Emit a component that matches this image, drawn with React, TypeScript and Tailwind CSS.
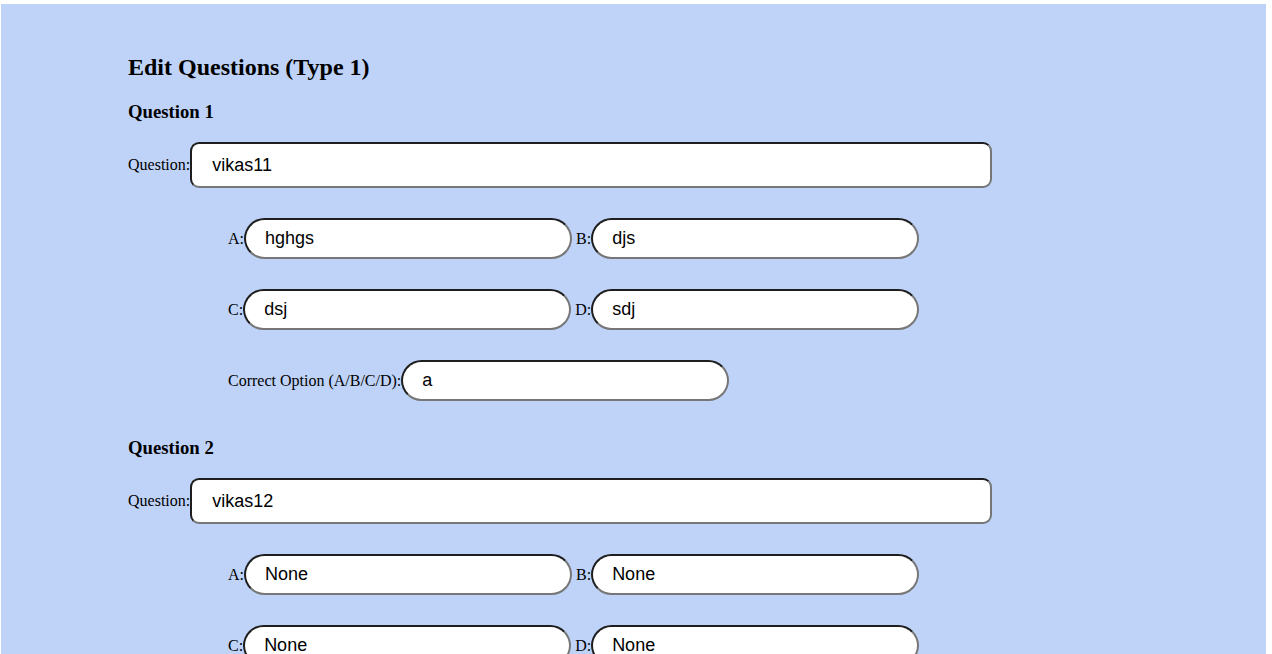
import React from 'react'

type Question = {
  id: number
  text: string
  a: string
  b: string
  c: string
  d: string
  correct: string
}

const QUESTIONS: Question[] = [
  { id: 1, text: 'vikas11', a: 'hghgs', b: 'djs', c: 'dsj', d: 'sdj', correct: 'a' },
  { id: 2, text: 'vikas12', a: 'None', b: 'None', c: 'None', d: 'None', correct: 'None' },
]

const serif = "font-['Liberation_Serif','Times_New_Roman',serif]"
const inputBase =
  "box-border bg-white text-black text-[18px] font-['Liberation_Sans',Arial,sans-serif] border-2 border-solid border-t-[#1e1e1e] border-l-[#1e1e1e] border-b-[#767676] border-r-[#767676] outline-none"

function OptionInput({ label, value, className = '' }: { label: string; value: string; className?: string }) {
  return (
    <div className={`flex items-center ${className}`}>
      <label className={`${serif} text-[16px] text-black`}>{label}</label>
      <input
        defaultValue={value}
        className={`${inputBase} w-[328px] h-[41px] rounded-full pl-[19px]`}
      />
    </div>
  )
}

function QuestionBlock({ q, first }: { q: Question; first: boolean }) {
  return (
    <div className={first ? 'mt-[20px]' : 'mt-[36px]'}>
      <h3 className={`${serif} text-[18.72px] font-bold leading-[22px] text-black`}>Question {q.id}</h3>
      <div className="mt-[19px] flex items-center">
        <label className={`${serif} text-[16px] text-black`}>Question:</label>
        <input
          defaultValue={q.text}
          className={`${inputBase} w-[802px] h-[46px] rounded-[9px] pl-[20px]`}
        />
      </div>
      <div className="pl-[100px] mt-[30px] flex flex-col gap-[30px]">
        <div className="flex items-center">
          <OptionInput label="A:" value={q.a} />
          <OptionInput label="B:" value={q.b} className="ml-[4px]" />
        </div>
        <div className="flex items-center">
          <OptionInput label="C:" value={q.c} />
          <OptionInput label="D:" value={q.d} className="ml-[4px]" />
        </div>
        <OptionInput label="Correct Option (A/B/C/D):" value={q.correct} />
      </div>
    </div>
  )
}

export default function App() {
  return (
    <div className="min-h-screen bg-white pt-[4px] pl-[1px] pr-[6px]">
      <div className="bg-[#bfd3f8] pl-[127px] pt-[49px] pb-[60px] min-h-[700px]">
        <h2 className={`${serif} text-[24px] font-bold leading-[28px] text-black`}>Edit Questions (Type 1)</h2>
        {QUESTIONS.map((q, i) => (
          <QuestionBlock key={q.id} q={q} first={i === 0} />
        ))}
      </div>
    </div>
  )
}
